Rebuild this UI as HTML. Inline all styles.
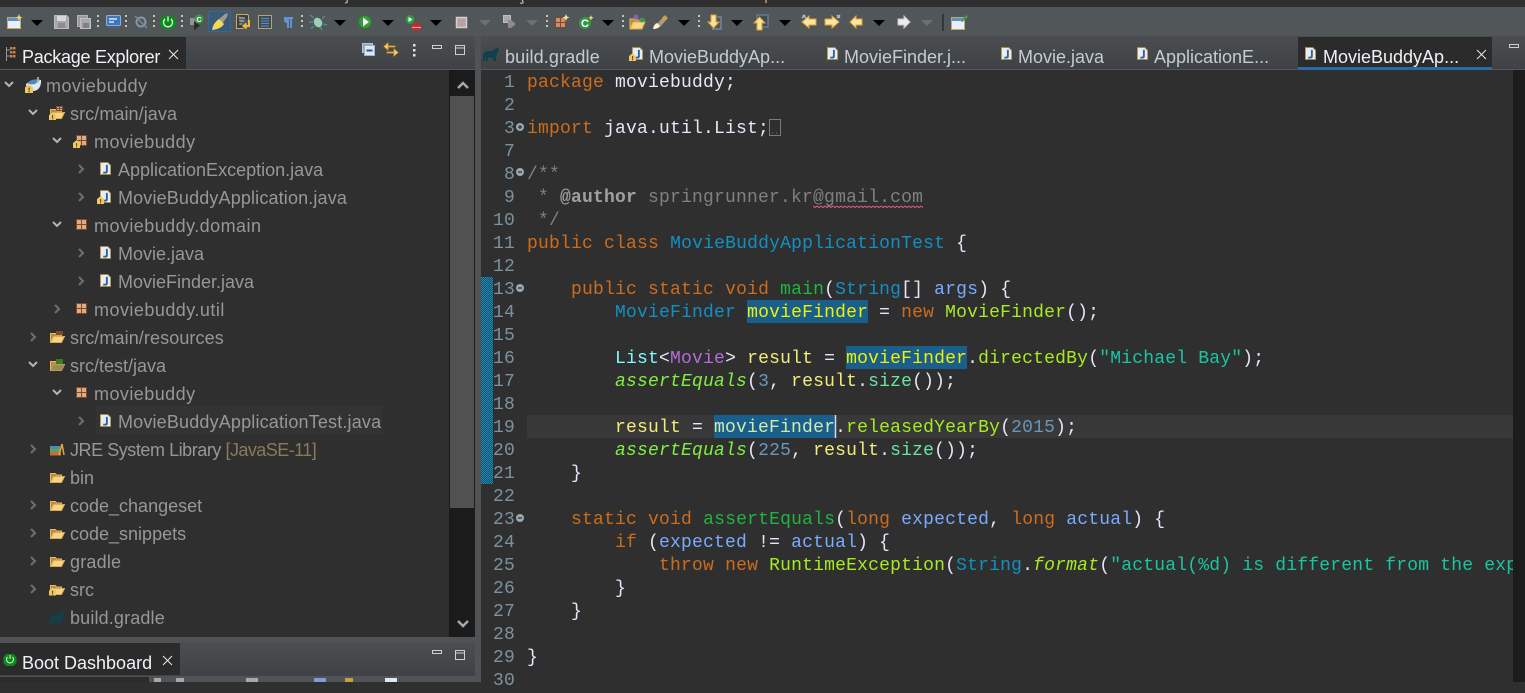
<!DOCTYPE html>
<html><head><meta charset="utf-8"><style>
html,body{margin:0;padding:0;background:#2f2f2f}
body{width:1525px;height:682px;overflow:hidden;position:relative;font-family:"Liberation Sans",sans-serif}
.b{position:absolute}
svg.o{position:absolute;left:0;top:0}
.t{position:absolute;font-size:18px;line-height:28px;height:28px;color:#979797;white-space:nowrap}
.tab{position:absolute;top:43px;font-size:18px;line-height:28px;color:#c3ccd3;white-space:nowrap}
pre{position:absolute;margin:0;font-family:"Liberation Mono",monospace;font-size:18px;letter-spacing:.2px;line-height:23px;color:#e6e6fa}
.k{color:#cc6c1d}.c{color:#1290c3}.m{color:#1eb540}.i{color:#79abff}.l{color:#f3ec79}.a{color:#80f040;font-style:italic}.s{color:#17c6a3}.n{color:#6897bb}.d{color:#a7ec21}.z{color:#66e6a0}.g{color:#808080}.ga{color:#a0a0a0;font-weight:bold}.f{color:#a7ec21;font-style:italic}.w{color:#80f8ff}.p{color:#b66cd8}
.h{color:#f0f000}.h2{color:#cfeab0}
</style></head><body>
<div class="b" style="left:0;top:7px;width:1525px;height:29px;background:#515658"></div>
<div class="b" style="left:0;top:36px;width:1525px;height:33px;background:linear-gradient(#4b4e51,#3f4245)"></div>
<div class="b" style="left:0;top:69px;width:1525px;height:1px;background:#55585a"></div>
<div class="b" style="left:0;top:37px;width:186px;height:32px;background:#2b2b2b"></div>
<div class="b" style="left:1298px;top:37px;width:194px;height:30px;background:#2b2b2b"></div>
<div class="b" style="left:1298px;top:67px;width:194px;height:3px;background:#2b6aa3"></div>
<div class="b" style="left:475px;top:36px;width:6px;height:646px;background:#4f5356"></div>
<div class="b" style="left:449px;top:70px;width:26px;height:567px;background:#1b1b1b"></div>
<div class="b" style="left:450px;top:96px;width:24px;height:412px;background:#515151"></div>
<div class="b" style="left:1513px;top:70px;width:12px;height:612px;background:#1c1c1c"></div>
<div class="b" style="left:0;top:637px;width:475px;height:6px;background:#4f5356"></div>
<div class="b" style="left:0;top:643px;width:475px;height:33px;background:linear-gradient(#4b4e51,#3f4245)"></div>
<div class="b" style="left:0;top:643px;width:180px;height:32px;background:#2b2b2b"></div>
<div class="b" style="left:0;top:676px;width:475px;height:6px;background:#505457"></div>
<div class="b" style="left:0;top:677px;width:149px;height:5px;background:#2b2b2b"></div>
<div class="b" style="left:96px;top:406px;width:286px;height:28px;background:#333333"></div>
<div class="b" style="left:527px;top:415px;width:986px;height:23px;background:#383838"></div>
<div class="b" style="left:747px;top:300px;width:121px;height:23px;background:#1a5e8c"></div>
<div class="b" style="left:846px;top:346px;width:121px;height:23px;background:#1a5e8c"></div>
<div class="b" style="left:714px;top:415px;width:121px;height:23px;background:#1a5e8c"></div>

<svg class="o" width="1525" height="682" viewBox="0 0 1525 682">
<defs>
<pattern id="dth" width="2" height="2" patternUnits="userSpaceOnUse"><rect width="2" height="2" fill="#14506e"/><rect width="1" height="1" fill="#2188b0"/><rect x="1" y="1" width="1" height="1" fill="#2188b0"/></pattern>
<pattern id="sq" x="813" y="205" width="4" height="3" patternUnits="userSpaceOnUse"><path d="M0 1l2 1.500L4 1" fill="none" stroke="#e0608a"/></pattern>
<symbol id="j" viewBox="0 0 12 14" overflow="visible"><path d="M.5.5h8l3 3v10H.5z" fill="#e6edf4" stroke="#b1954f"/><path d="M6.5 3h2v7q0 2.500-2.500 2.500H3.500v-2h2q1 0 1-1z" fill="#2f5f9e"/></symbol>
<symbol id="pk" viewBox="0 0 11 11" overflow="visible"><rect width="11" height="11" fill="#7d4a30"/><path d="M1 1h4v4H1zM6 1h4v4H6zM1 6h4v4H1zM6 6h4v4H6z" fill="#e0ab80"/></symbol>
<symbol id="fo" viewBox="0 0 15 11" overflow="visible"><path d="M.5 10.500V1.500h5l1 1.500h5v2" fill="#b98a3a" stroke="#e8b860"/><path d="M.5 10.500l3-6h11l-3 6z" fill="#f4d488" stroke="#e2a94c"/></symbol>
<symbol id="wn" viewBox="0 0 8 9" overflow="visible"><path d="M4 0L8 3.500V9H0V3.500z" fill="#efc866"/><rect x="3.500" y="3.500" width="1.200" height="3" fill="#5a4010"/><rect x="3.500" y="7" width="1.200" height="1.200" fill="#5a4010"/></symbol>
<symbol id="el" viewBox="0 0 16 14" overflow="visible"><path d="M0 14V9Q0 4 5 4h5q2-3 4-3t2 2q0 2-2 2v3h-1v6h-3v-3H5v3H3v-3H2v3z" fill="#123f4c"/></symbol>
<symbol id="dr" viewBox="0 0 12 6" overflow="visible"><path d="M0 0h12L6 6z"/></symbol>
<symbol id="du" viewBox="0 0 10 6" overflow="visible"><path d="M1 1l4 4 4-4" fill="none" stroke="#b4b4b4" stroke-width="2"/></symbol>
<symbol id="ri" viewBox="0 0 6 10" overflow="visible"><path d="M1 1l4 4-4 4" fill="none" stroke="#6f6f6f" stroke-width="2"/></symbol>
<symbol id="se" viewBox="0 0 2 14" overflow="visible"><path d="M1 0v14" stroke="#c9c4b0" stroke-width="2" stroke-dasharray="2 3"/></symbol>
</defs>

<rect x="481" y="277" width="12" height="207" fill="url(#dth)"/>

<!-- title strip remnants -->
<path d="M347 0q1 3-2 3" fill="none" stroke="#d8d8d8"/><path d="M512 0q3 4-2 3" fill="none" stroke="#d8d8d8" transform="translate(10 0)"/><path d="M766 0v3" stroke="#c8a060" stroke-width="1.500"/>

<!-- toolbar -->
<rect x="7.500" y="17.500" width="13" height="11" fill="#e9eff6" stroke="#c0a878"/><rect x="8" y="18" width="12" height="3" fill="#5b93c9"/><path d="M19 14l1 2.500 2.500 1-2.500 1-1 2.500-1-2.500-2.500-1 2.500-1z" fill="#f3d36b"/>
<g fill="#000"><use href="#dr" x="31" y="20" width="12" height="6"/><use href="#dr" x="334" y="20" width="12" height="6"/><use href="#dr" x="382" y="20" width="12" height="6"/><use href="#dr" x="430" y="20" width="12" height="6"/><use href="#dr" x="602" y="20" width="12" height="6"/><use href="#dr" x="678" y="20" width="12" height="6"/><use href="#dr" x="731" y="20" width="12" height="6"/><use href="#dr" x="779" y="20" width="12" height="6"/><use href="#dr" x="873" y="20" width="12" height="6"/></g>
<g fill="#6c7072"><use href="#dr" x="479" y="20" width="12" height="6"/><use href="#dr" x="526" y="20" width="12" height="6"/><use href="#dr" x="921" y="20" width="12" height="6"/></g>
<path d="M54.500 15.500h12l2 2v11h-14z" fill="#a8a8a8" stroke="#bcbcbc"/><rect x="57" y="16" width="9" height="5" fill="#d8d8d8"/><rect x="58" y="23" width="7" height="5" fill="#8c8c8c"/>
<rect x="77.500" y="15.500" width="10" height="11" fill="#9a9a9a" stroke="#b4b4b4"/><rect x="80.500" y="18.500" width="10" height="10" fill="#a8a8a8" stroke="#c0c0c0"/><rect x="83" y="23" width="6" height="5" fill="#808080"/>
<use href="#se" x="97" y="15" width="2" height="14"/><use href="#se" x="125" y="15" width="2" height="14"/><use href="#se" x="153" y="15" width="2" height="14"/><use href="#se" x="181" y="15" width="2" height="14"/><use href="#se" x="301" y="15" width="2" height="14"/><use href="#se" x="546" y="15" width="2" height="14"/><use href="#se" x="622" y="15" width="2" height="14"/><use href="#se" x="698" y="15" width="2" height="14"/>
<rect x="106.500" y="15.500" width="14" height="10" rx="1" fill="#3a76c2" stroke="#8fb0d8"/><path d="M109 19h8M109 22h5" stroke="#fff" stroke-width="1.200"/><path d="M108 27.500h11" stroke="#3a76c2" stroke-dasharray="1 1"/>
<circle cx="141" cy="22" r="4.500" fill="none" stroke="#8098a8" stroke-width="2"/><path d="M135 16l12 12" stroke="#7d8a92" stroke-width="1.500"/>
<path d="M164 15.500h8l4 4v6l-4 3.500h-8l-4-3.500v-6z" fill="#0c8a1c"/><path d="M165 19a4.500 4.500 0 1 0 6 0M168 16.500v5" fill="none" stroke="#e0f5e0" stroke-width="1.300"/>
<rect x="190" y="18" width="7" height="7" fill="#9a8f9f"/><path d="M194 21l6 4.500-6 5z" fill="#2c2c2c"/><circle cx="199" cy="19" r="4.500" fill="#3a9a4a"/><text x="196.500" y="22" font-size="7" font-weight="bold" fill="#fff" font-family="Liberation Sans">C</text>
<rect x="208.500" y="11.500" width="22" height="20" fill="#3c5a76" stroke="#35689a"/><path d="M218 20l7-6 3-1-1 4-5 7z" fill="#a09a88"/><path d="M212 30q1-7 7-11l5 5q-3 5-12 6z" fill="#f1d95c"/>
<path d="M236.500 14.500h11l1 1v5M236.500 14.500v14h7" fill="#3d3e3c" stroke="#c8ac68"/><path d="M239 18h6M239 21h5M239 24h3" stroke="#c8c8c8"/><path d="M249 20v6h-5M246.500 23.500L243.500 26l3 2.500" fill="none" stroke="#f0b838" stroke-width="2"/>
<rect x="258.500" y="15.500" width="13" height="13" fill="#3d4a58" stroke="#b3a272"/><path d="M261 18.500h8M261 21h8M261 23.500h8M261 26h8" stroke="#5e8fc4"/>
<path d="M284 17h9v2h-1v9h-2v-9h-1v9h-2v-5q-3 0-3-3t0-3z" fill="#5f95d2"/>
<ellipse cx="318" cy="22.500" rx="4" ry="5" fill="#9cd0b4" transform="rotate(-30 318 22.500)"/><path d="M310 15l4 3M325 16l-3 3M309 22h4M327 25l-4-1M311 29l3-3M322 30l-2-3" stroke="#3a9aa0" stroke-width="1.200"/>
<circle cx="365" cy="22" r="6.500" fill="#359a3c" stroke="#2a7a30" stroke-width="1"/><path d="M363 17.500l6 4.500-6 4.500z" fill="#f4f4e8"/>
<circle cx="410" cy="19.500" r="4.500" fill="#349a40"/><path d="M408.500 17l4 2.500-4 2.500z" fill="#fff"/><rect x="412" y="25" width="9" height="5" fill="#d8262a"/><path d="M414.500 25v-2h4v2" fill="none" stroke="#d8262a"/><path d="M412 27.500h9" stroke="#f0a0a0"/>
<rect x="456.500" y="17.500" width="10" height="10" fill="#b8a0a3" stroke="#d4d0d0" stroke-width="1.500"/>
<rect x="503.500" y="15.500" width="7" height="7" fill="#a8a8a8" stroke="#c0c0c0"/><path d="M508 20h3l5 4-5 4h-3z" fill="#8c8c8c"/>
<rect x="555" y="17" width="11" height="11" fill="#7d4a30"/><path d="M556 18h4v4h-4zM561 18h4v4h-4zM556 23h4v4h-4zM561 23h4v4h-4z" fill="#c89070"/><path d="M566 14l1 2.500 2.500 1-2.500 1-1 2.500-1-2.500-2.500-1 2.500-1z" fill="#f3e6a0"/>
<circle cx="585" cy="23" r="6" fill="#2f9a44"/><text x="581" y="27" font-size="11" font-weight="bold" fill="#fff" font-family="Liberation Sans">C</text><path d="M591 15l.8 2 2 .8-2 .8-.8 2-.8-2-2-.8 2-.8z" fill="#f3d36b"/>
<path d="M630 29v-10h5l1 1h6v2" fill="#b98a3a" stroke="#e8b860"/><path d="M630 29l3-7h12l-3 7z" fill="#f4d488" stroke="#e2a94c"/><circle cx="636" cy="17" r="2.500" fill="#8a5ac0"/><ellipse cx="642" cy="20" rx="3" ry="2.300" fill="#3f9a50"/>
<path d="M654 29l3-5 8-9 3 3-8 9z" fill="#b09a7c"/><path d="M653 29q1-5 4-6l3 3q-2 3-7 3z" fill="#fff4d0"/><path d="M662 18l3 3 2-2-3-3z" fill="#d8a040"/>
<path d="M717 17h4v12h-9" fill="none" stroke="#7f9ec0"/><path d="M711 15h5v7h3l-5.500 6-5.500-6h3z" fill="#f6e3a0" stroke="#e2a02c"/>
<rect x="757" y="15" width="11" height="12" fill="#3c4a5a" stroke="#7f9ec0" opacity=".8"/><path d="M757 30v-7h-3l5.500-6 5.500 6h-3v7z" fill="#f6e3a0" stroke="#e2a02c"/>
<path d="M816 19h-7v-3l-7 6 7 6v-3h7z" fill="#f8e6a8" stroke="#e2a02c"/><path d="M803 15l3 3M805 15l-3 3" stroke="#a8c0d8" stroke-width="1.500"/>
<path d="M825 19h7v-3l7 6-7 6v-3h-7z" fill="#f8e6a8" stroke="#e2a02c"/><path d="M837 15l3 3M840 15l-3 3" stroke="#a8c0d8" stroke-width="1.500"/>
<path d="M862 19h-6v-3l-6 6 6 6v-3h6z" fill="#f8e6a8" stroke="#e2a02c"/>
<path d="M898 19h6v-3l6 6-6 6v-3h-6z" fill="#ececec" stroke="#c8c8c8"/>
<path d="M943 14v17" stroke="#2a2a2a" stroke-width="1.500"/>
<rect x="951.500" y="17.500" width="13" height="12" fill="#e9eff6" stroke="#c0a878"/><rect x="952" y="18" width="12" height="3" fill="#5b93c9"/><path d="M961 22l3-5 2-2 2 2-2 2-4 3z" fill="#3f9a50"/>

<!-- left view head -->
<path d="M6.500 47v14M7 50h3M7 56h3" stroke="#8a9aa6"/><g fill="#c77f4a"><rect x="10" y="47" width="2.500" height="2.500"/><rect x="13" y="47" width="2.500" height="2.500"/><rect x="10" y="51" width="2.500" height="2.500"/><rect x="13" y="51" width="2.500" height="2.500"/><rect x="10" y="55" width="2.500" height="2.500"/><rect x="13" y="55" width="2.500" height="2.500"/></g>
<path d="M169 50l9 9M178 50l-9 9" stroke="#e8e8e8"/>
<rect x="362.500" y="43.500" width="10" height="9" fill="#8da6be" stroke="#b8c8d8"/><rect x="364.500" y="45.500" width="10" height="10" fill="#dfe8f0" stroke="#9fb4c8"/><path d="M366.500 50.500h6" stroke="#1f5a9a" stroke-width="2"/>
<path d="M395 46h-7v-3l-4 3.500 4 3.500v-3h7zM387 52h7v-3l4 3.500-4 3.500v-3h-7z" fill="#f0d080" stroke="#e2a02c" stroke-width=".8"/>
<g fill="#e0e0e0"><rect x="413" y="44" width="2.500" height="2.500"/><rect x="413" y="49" width="2.500" height="2.500"/><rect x="413" y="54" width="2.500" height="2.500"/></g>
<rect x="432.500" y="45.500" width="9" height="3" fill="none" stroke="#cfcfcf"/><rect x="455.500" y="45.500" width="9" height="9" fill="none" stroke="#cfcfcf"/><path d="M456 48h8" stroke="#cfcfcf"/>
<rect x="1509.500" y="44.500" width="9" height="3" fill="none" stroke="#cfcfcf"/>
<path d="M1477 50l9 9M1486 50l-9 9" stroke="#e8e8e8"/>
<!-- editor tab icons -->
<use href="#el" x="483" y="47" width="16" height="14"/>
<use href="#j" x="632" y="47" width="11" height="13"/><use href="#wn" x="629" y="53" width="7" height="8"/>
<use href="#j" x="827" y="47" width="11" height="13"/><use href="#j" x="1001" y="47" width="11" height="13"/><use href="#j" x="1137" y="47" width="11" height="13"/><use href="#j" x="1305" y="47" width="11" height="13"/>

<!-- scrollbar arrows -->
<path d="M458 88l5-5 5 5" fill="none" stroke="#a8a8a8" stroke-width="2.500"/>
<path d="M458 621l5 5 5-5" fill="none" stroke="#a8a8a8" stroke-width="2.500"/>

<!-- tree chevrons -->
<use href="#du" x="4" y="81" width="10" height="6"/><use href="#du" x="28" y="109" width="10" height="6"/><use href="#du" x="52" y="137" width="10" height="6"/><use href="#du" x="52" y="221" width="10" height="6"/><use href="#du" x="28" y="361" width="10" height="6"/><use href="#du" x="52" y="389" width="10" height="6"/>
<use href="#ri" x="78" y="164" width="6" height="10"/><use href="#ri" x="78" y="192" width="6" height="10"/><use href="#ri" x="78" y="248" width="6" height="10"/><use href="#ri" x="78" y="276" width="6" height="10"/><use href="#ri" x="54" y="304" width="6" height="10"/><use href="#ri" x="30" y="332" width="6" height="10"/><use href="#ri" x="78" y="416" width="6" height="10"/><use href="#ri" x="30" y="444" width="6" height="10"/><use href="#ri" x="30" y="500" width="6" height="10"/><use href="#ri" x="30" y="528" width="6" height="10"/><use href="#ri" x="30" y="556" width="6" height="10"/><use href="#ri" x="30" y="584" width="6" height="10"/>

<!-- tree icons -->
<path d="M26 84q7-6 15-4v3q-1 7-7 8h-4q-4-2-4-7z" fill="#dfe8f0"/><path d="M27 83q6-5 13-3l-5 4q-5 1-8-1z" fill="#4a8ac0"/><path d="M38 77v6" stroke="#d8c088" stroke-width="1.500"/><use href="#wn" x="25" y="84" width="8" height="9"/>
<use href="#fo" x="50" y="108" width="15" height="11"/><rect x="56" y="106" width="7" height="5" fill="#7d4a30"/><path d="M57 107h2v1h-2zM60 107h2v1h-2zM57 109h2v1h-2zM60 109h2v1h-2z" fill="#e0ab80"/><use href="#wn" x="49" y="112" width="7" height="8"/>
<use href="#pk" x="76" y="135" width="11" height="11"/><use href="#wn" x="73" y="140" width="7" height="8"/>
<use href="#j" x="100" y="162" width="11" height="13"/><use href="#j" x="100" y="190" width="11" height="13"/><use href="#wn" x="97" y="196" width="7" height="8"/>
<use href="#pk" x="76" y="219" width="11" height="11"/><use href="#j" x="100" y="246" width="11" height="13"/><use href="#j" x="100" y="274" width="11" height="13"/><use href="#pk" x="76" y="303" width="11" height="11"/>
<use href="#fo" x="50" y="332" width="15" height="11"/><rect x="56" y="331" width="7" height="4" fill="#7d4a30"/>
<use href="#fo" x="50" y="360" width="15" height="11"/><path d="M50.500 370.500l3-6h11l-3 6z" fill="#9a8a58"/><rect x="56" y="359" width="7" height="5" fill="#3e7a22"/>
<use href="#pk" x="76" y="387" width="11" height="11"/><use href="#j" x="100" y="414" width="11" height="13"/>
<rect x="50" y="446" width="10" height="3" fill="#4a90b0"/><rect x="50" y="449" width="10" height="3" fill="#60a060"/><rect x="50" y="452" width="11" height="3.500" fill="#c86a3a"/><path d="M59 455l3-11 2 11" fill="none" stroke="#e0a840" stroke-width="1.500"/>
<use href="#fo" x="50" y="472" width="15" height="11"/><use href="#fo" x="50" y="500" width="15" height="11"/><use href="#fo" x="50" y="528" width="15" height="11"/><use href="#fo" x="50" y="556" width="15" height="11"/><use href="#fo" x="50" y="584" width="15" height="11"/><use href="#wn" x="49" y="587" width="7" height="9"/>
<use href="#el" x="49" y="611" width="16" height="13"/>

<!-- boot dashboard -->
<path d="M6.500 654h7l3 3v6l-3 3h-7l-3-3v-6z" fill="#0c8a1c"/><path d="M7.500 657a3.500 3.500 0 1 0 5 0M10 655v4" fill="none" stroke="#e0f5e0"/>
<path d="M163 656l9 9M172 656l-9 9" stroke="#e8e8e8"/>
<rect x="432.500" y="650.500" width="9" height="3" fill="none" stroke="#cfcfcf"/><rect x="455.500" y="650.500" width="9" height="9" fill="none" stroke="#cfcfcf"/><path d="M456 653h8" stroke="#cfcfcf"/>
<g fill="#a8a8a8"><rect x="154" y="678" width="7" height="4"/><rect x="176" y="678" width="8" height="4"/><rect x="246" y="678" width="12" height="4"/><rect x="314" y="678" width="12" height="4" fill="#7aa0d0"/><rect x="345" y="678" width="8" height="4" fill="#c8a040"/><rect x="385" y="678" width="12" height="4" fill="#dfe8f0"/></g>

<!-- folding marks -->
<g fill="#9aa8b2"><circle cx="520" cy="127" r="4"/><circle cx="520" cy="172" r="4"/><circle cx="520" cy="288" r="4"/><circle cx="520" cy="518" r="4"/></g>
<path d="M518 127h4M520 125v4M518 172h4M518 288h4M518 518h4" stroke="#2f2f2f" stroke-width="1.200"/>
<rect x="769.500" y="119.500" width="11" height="16" fill="none" stroke="#7a7a7a"/><path d="M772 133h1M776 133h1" stroke="#7a7a7a"/>
<rect x="813" y="205" width="110" height="3" fill="url(#sq)"/>
<path d="M835.500 415v23" stroke="#d8d8e8" stroke-width="1.500"/>
</svg>

<div class="tab" style="left:22px;color:#eef2f6;letter-spacing:-.25px">Package Explorer</div>
<div class="tab" style="left:505px;letter-spacing:.15px">build.gradle</div>
<div class="tab" style="left:649px">MovieBuddyAp...</div>
<div class="tab" style="left:844px">MovieFinder.j...</div>
<div class="tab" style="left:1018px">Movie.java</div>
<div class="tab" style="left:1154px">ApplicationE...</div>
<div class="tab" style="left:1323px;color:#eef2f6">MovieBuddyAp...</div>
<div class="tab" style="left:22px;top:649px;color:#eef2f6">Boot Dashboard</div>

<div class="t" style="left:46px;top:72px;letter-spacing:.45px">moviebuddy</div>
<div class="t" style="left:70px;top:100px;letter-spacing:.08px">src/main/java</div>
<div class="t" style="left:94px;top:128px;letter-spacing:.45px">moviebuddy</div>
<div class="t" style="left:118px;top:156px">ApplicationException.java</div>
<div class="t" style="left:118px;top:184px;letter-spacing:.15px">MovieBuddyApplication.java</div>
<div class="t" style="left:94px;top:212px;letter-spacing:.45px">moviebuddy.domain</div>
<div class="t" style="left:118px;top:240px">Movie.java</div>
<div class="t" style="left:118px;top:268px">MovieFinder.java</div>
<div class="t" style="left:94px;top:296px;letter-spacing:.47px">moviebuddy.util</div>
<div class="t" style="left:70px;top:324px;letter-spacing:.1px">src/main/resources</div>
<div class="t" style="left:70px;top:352px">src/test/java</div>
<div class="t" style="left:94px;top:380px;letter-spacing:.45px">moviebuddy</div>
<div class="t" style="left:118px;top:408px;letter-spacing:.17px">MovieBuddyApplicationTest.java</div>
<div class="t" style="left:70px;top:436px;letter-spacing:-.45px">JRE System Library <span style="color:#8a7a55;letter-spacing:-.55px">[JavaSE-11]</span></div>
<div class="t" style="left:70px;top:464px">bin</div>
<div class="t" style="left:70px;top:492px">code_changeset</div>
<div class="t" style="left:70px;top:520px">code_snippets</div>
<div class="t" style="left:70px;top:548px;letter-spacing:.2px">gradle</div>
<div class="t" style="left:70px;top:576px">src</div>
<div class="t" style="left:70px;top:604px;letter-spacing:.15px">build.gradle</div>

<pre style="left:480px;top:72px;width:35px;text-align:right;color:#7b939f">1
2
3
7
8
9
10
11
12
13
14
15
16
17
18
19
20
21
22
23
24
25
26
27
28
29
30</pre>
<pre style="left:527px;top:72px;width:986px;overflow:hidden"><span class="k">package</span> moviebuddy;

<span class="k">import</span> java.util.List;

<span class="g">/**</span>
<span class="g"> * </span><span class="ga">@author</span><span class="g"> springrunner.kr@gmail.com</span>
<span class="g"> */</span>
<span class="k">public</span> <span class="k">class</span> <span class="c">MovieBuddyApplicationTest</span> {

    <span class="k">public</span> <span class="k">static</span> <span class="k">void</span> <span class="m">main</span>(<span class="c">String</span>[] <span class="i">args</span>) {
        <span class="c">MovieFinder</span> <span class="h">movieFinder</span> = <span class="k">new</span> <span class="d">MovieFinder</span>();

        <span class="w">List</span>&lt;<span class="p">Movie</span>&gt; <span class="l">result</span> = <span class="h">movieFinder</span>.<span class="d">directedBy</span>(<span class="s">"Michael Bay"</span>);
        <span class="a">assertEquals</span>(<span class="n">3</span>, <span class="l">result</span>.<span class="z">size</span>());

        <span class="l">result</span> = <span class="h2">movieFinder</span>.<span class="d">releasedYearBy</span>(<span class="n">2015</span>);
        <span class="a">assertEquals</span>(<span class="n">225</span>, <span class="l">result</span>.<span class="z">size</span>());
    }

    <span class="k">static</span> <span class="k">void</span> <span class="m">assertEquals</span>(<span class="k">long</span> <span class="i">expected</span>, <span class="k">long</span> <span class="i">actual</span>) {
        <span class="k">if</span> (<span class="i">expected</span> != <span class="i">actual</span>) {
            <span class="k">throw</span> <span class="k">new</span> <span class="d">RuntimeException</span>(<span class="c">String</span>.<span class="f">format</span>(<span class="s">"actual(%d) is different from the expected(%d)"</span>
        }
    }

}
</pre>
</body></html>
